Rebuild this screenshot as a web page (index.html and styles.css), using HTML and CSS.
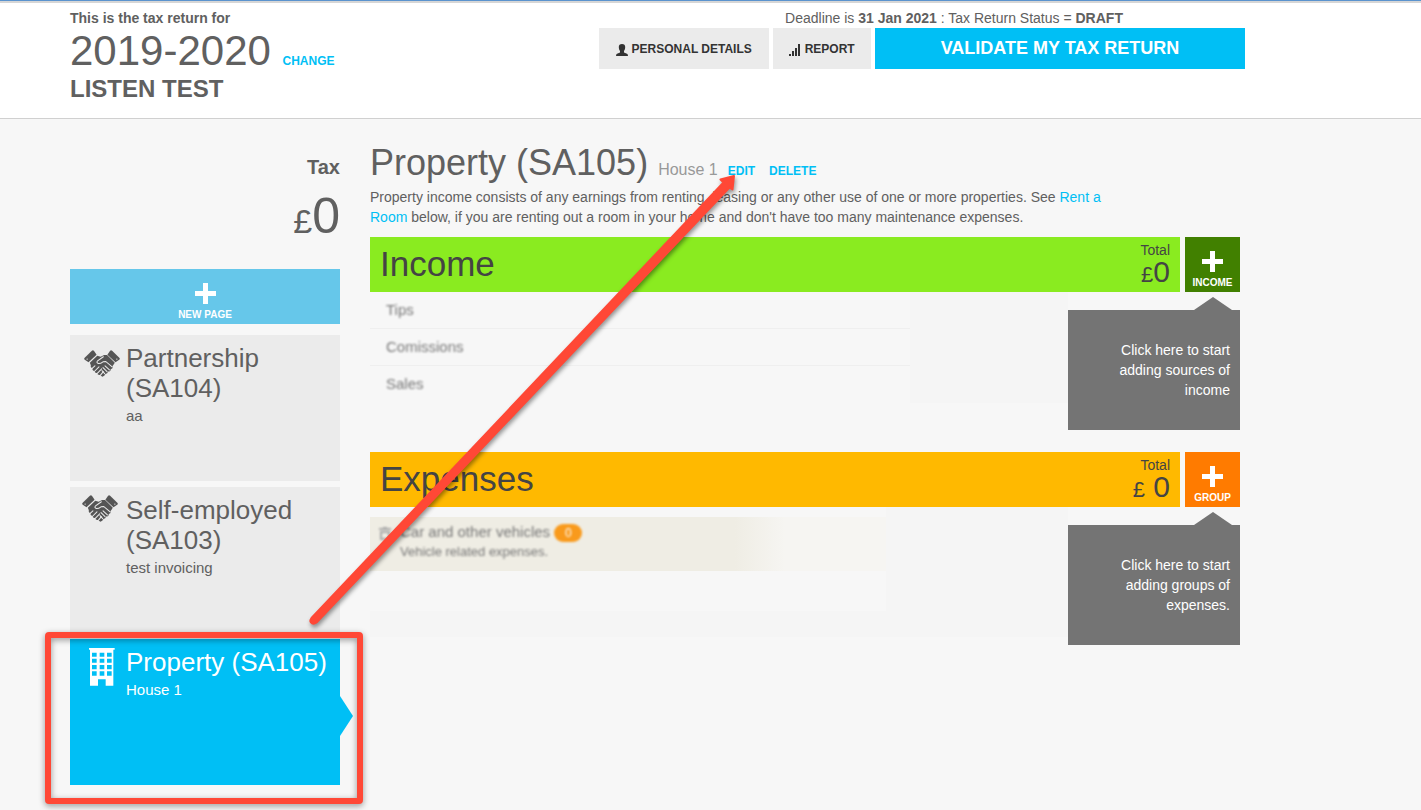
FILE: index.html
```
<!DOCTYPE html>
<html lang="en">
<head>
    <meta charset="UTF-8">
    <title>Tax return 2019-2020</title>
    <link rel="stylesheet" href="styles.css">
</head>
<body>
    <svg width="0" height="0" class="defs" aria-hidden="true">
        <symbol id="handshake" viewBox="0 0 106 80">
            <path fill="#555" d="M1 24L23 2q3-3 6 0l8 12-24 22L2 29q-3-2-1-5z"/>
            <path fill="#555" d="M105 24L83 2q-3-3-6 0l-8 12 24 22 11-7q3-2 1-5z"/>
            <path fill="#555" d="M17 38L39 17l10 3 10-5h9l23 23-7 10q3 7-5 8 0 8-8 8-1 7-8 7-2 7-9 8l-7-5q-8 1-8-6-8 1-8-6-8-1-6-8-7-2-5-9z"/>
            <g fill="none" stroke="#ebebeb" stroke-width="3" stroke-linecap="round">
                <path d="M57 20L40 32q-5 6 2 8 6 1 14-5l8-1 19 16"/>
                <path d="M23 55l9-8M31 63l13-13M39 69l13-13M48 75l9-11"/>
                <path d="M62 47l13 12M56 52l12 12M53 61l8 9"/>
            </g>
            <circle cx="9" cy="27" r="2" fill="#ebebeb"/>
            <circle cx="97" cy="27" r="2" fill="#ebebeb"/>
        </symbol>
        <symbol id="plus" viewBox="0 0 21 21">
            <path fill="#fff" d="M8 0h5v8h8v5h-8v8H8v-8H0V8h8z"/>
        </symbol>
    </svg>

    <header>
        <div class="wrap top">
            <div>
                <p class="label">This is the tax return for</p>
                <p class="year">2019-2020 <a class="action" href="#">CHANGE</a></p>
                <p class="client">LISTEN TEST</p>
            </div>
            <div class="tools">
                <p class="deadline">Deadline is <b>31 Jan 2021</b> : Tax Return Status = <b>DRAFT</b></p>
                <div class="buttons">
                    <button class="grey details">
                        <svg width="12" height="12" viewBox="0 0 12 12"><path fill="#333" d="M6 0c2.200 0 3.200 1 3.200 3 0 2-.6 3-1.200 4v1.500L11 9.700q1 .5 1 2.300H0q0-1.800 1-2.300l3-1.200V7C3.400 6 2.800 5 2.800 3c0-2 1-3 3.200-3z"/></svg>
                        PERSONAL DETAILS
                    </button>
                    <button class="grey report">
                        <svg width="12" height="12" viewBox="0 0 12 12"><path fill="#333" d="M0 10h2v2H0zM3 7h2v5H3zM6 4h2v8H6zM9 0h2v12H9z"/></svg>
                        REPORT
                    </button>
                    <button class="validate">VALIDATE MY TAX RETURN</button>
                </div>
            </div>
        </div>
    </header>

    <div class="wrap columns">
        <aside>
            <h2>Tax</h2>
            <p class="tax"><small>£</small>0</p>
            <button class="add newPage"><svg width="21" height="21"><use href="#plus"/></svg>NEW PAGE</button>
            <nav>
                <a class="card" href="#">
                    <span class="icon"><svg width="36" height="27"><use href="#handshake"/></svg></span>
                    <span><strong>Partnership (SA104)</strong><em>aa</em></span>
                </a>
                <a class="card" href="#">
                    <span class="icon upper"><svg width="36" height="27"><use href="#handshake"/></svg></span>
                    <span><strong>Self-employed (SA103)</strong><em>test invoicing</em></span>
                </a>
                <a class="card active" href="#">
                    <span class="icon building">
                        <svg width="26" height="38" viewBox="0 0 78 114">
                            <path fill="#fff" fill-rule="evenodd" d="M0 0h77v5h-4v108H50V94H27v19H3V5H0zM9 14v12h14V14zM32 14v12h14V14zM54 14v12h14V14zM9 32v12h14V32zM32 32v12h14V32zM54 32v12h14V32zM9 51v13h14V51zM32 51v13h14V51zM54 51v13h14V51zM9 70v13h14V70zM32 70v13h14V70zM54 70v13h14V70z"/>
                        </svg>
                    </span>
                    <span><strong>Property (SA105)</strong><em>House 1</em></span>
                </a>
            </nav>
        </aside>

        <main>
            <h1>Property (SA105) <small>House 1</small> <a class="action" href="#">EDIT</a> <a class="action" href="#">DELETE</a></h1>
            <p class="intro">Property income consists of any earnings from renting, leasing or any other use of one or more properties. See <a href="#">Rent a Room</a> below, if you are renting out a room in your home and don't have too many maintenance expenses.</p>

            <section>
                <div class="bar income">
                    <h3>Income</h3>
                    <p class="total">Total<span><small>£</small>0</span></p>
                </div>
                <button class="add addIncome"><svg width="21" height="21"><use href="#plus"/></svg>INCOME</button>
                <div class="list sources">
                    <ul>
                        <li><span>Tips</span></li>
                        <li><span>Comissions</span></li>
                        <li><span>Sales</span></li>
                    </ul>
                </div>
                <p class="hint">Click here to start adding sources of income</p>
            </section>

            <section>
                <div class="bar expenses">
                    <h3>Expenses</h3>
                    <p class="total">Total<span><small>£</small> 0</span></p>
                </div>
                <button class="add addGroup"><svg width="21" height="21"><use href="#plus"/></svg>GROUP</button>
                <div class="list groups">
                    <div class="inner">
                        <div class="group">
                            <svg width="12" height="13" viewBox="0 0 12 13"><path fill="none" stroke="#aaa" stroke-width="2" d="M0 2h12M2 5h8v7H2zM4 1h4"/></svg>
                            <div>
                                <p>Car and other vehicles <span class="count">0</span></p>
                                <p class="note">Vehicle related expenses.</p>
                            </div>
                        </div>
                    </div>
                </div>
                <p class="hint">Click here to start adding groups of expenses.</p>
            </section>
        </main>
    </div>

    <!-- annotations drawn over the page -->
    <div class="highlight"></div>
    <svg class="arrow" width="450" height="470" viewBox="300 165 450 470" aria-hidden="true">
        <path fill="#ff4836" stroke="#ff4836" stroke-width="2" stroke-linejoin="round" d="M311.500 618L723.500 182.500 720.500 179.500 734 176 732.500 189.500 729.500 187.500 316.500 622.500Q313 625 311 622.500 309.500 620.500 311.500 618z"/>
    </svg>
</body>
</html>
```
FILE: styles.css
```
*{
    box-sizing: border-box;
}
body{
    margin: 0;
    background: #f7f7f7;
    color: #606060;
    font-family: "Liberation Sans", Arial, sans-serif;
    font-size: 14px;
    line-height: 20px;
}
h1,h2,h3,p,ul{
    margin: 0;
    padding: 0;
    font-weight: normal;
}
a{
    color: #00bff5;
    text-decoration: none;
}
small{
    line-height: 1;
}
button{
    border: none;
    padding: 0;
    font-family: inherit;
    font-weight: bold;
    cursor: pointer;
}
.defs{
    position: absolute;
}
.wrap{
    max-width: 1175px;
    margin: 0 70px;
}
.action{
    font-size: 12px;
    line-height: 1;
    font-weight: bold;
}

/* header */
header{
    background: #fff;
    border-top: 1px solid #5a93ce;
    border-bottom: 1px solid #d0d0d0;
    box-shadow: inset 0 2px #d6d6d6;
    padding: 7px 0 14px;
}
.top{
    display: flex;
    justify-content: space-between;
}
.label{
    font-weight: bold;
}
.year{
    font-size: 42px;
    line-height: 46px;
}
.client{
    font-size: 24px;
    line-height: 30px;
    font-weight: bold;
}
.deadline{
    padding-left: 64px;
    text-align: center;
}
.buttons{
    display: flex;
    gap: 4px;
}
.buttons button{
    height: 41px;
}
.grey{
    background: #ebebeb;
    color: #333;
    font-size: 12px;
}
.grey svg{
    vertical-align: -3px;
}
.details{
    width: 170px;
}
.report{
    width: 98px;
}
.validate{
    width: 370px;
    background: #00bff5;
    color: #fff;
    font-size: 18px;
}

/* sidebar */
.columns{
    display: flex;
    gap: 30px;
    padding: 24px 5px 24px 0;
}
aside{
    flex: 0 0 270px;
    padding-top: 12px;
}
aside h2{
    font-size: 20px;
    line-height: 24px;
    font-weight: bold;
    text-align: right;
}
.tax{
    margin: 7px 0 23px;
    font-size: 50px;
    line-height: 60px;
    text-align: right;
}
.tax small{
    font-size: 34px;
}
.add{
    display: flex;
    flex-direction: column;
    align-items: center;
    gap: 4px;
    height: 55px;
    padding-top: 14px;
    color: #fff;
    font-size: 10px;
    line-height: 14px;
}
.newPage{
    width: 100%;
    background: #66c7ea;
}
nav{
    display: flex;
    flex-direction: column;
    gap: 6px;
    margin-top: 11px;
}
.card{
    display: flex;
    position: relative;
    min-height: 146px;
    padding-top: 8px;
    background: #ebebeb;
    color: #606060;
}
.icon{
    flex: 0 0 56px;
    padding: 7px 0 0 14px;
}
.icon.upper{
    padding: 0 0 0 12px;
}
.icon.building{
    padding: 1px 0 0 19px;
}
.icon svg{
    display: block;
}
.card strong,.card em{
    display: block;
    font-weight: normal;
    font-style: normal;
}
.card strong{
    font-size: 26px;
    line-height: 30px;
    margin-bottom: 3px;
}
.card em{
    font-size: 15px;
}
.active{
    background: #00bff5;
    color: #fff;
}
.active:after{
    content: "";
    position: absolute;
    left: 100%;
    top: 57px;
    border: solid transparent;
    border-width: 20px 0 20px 13px;
    border-left-color: #00bff5;
}

/* content */
main{
    flex: 1;
}
h1{
    font-size: 36px;
    line-height: 40px;
    margin-bottom: 4px;
}
h1 small{
    color: #999;
    font-size: 16px;
}
h1 .action + .action{
    margin-left: 4px;
}
.intro{
    max-width: 750px;
    margin-bottom: 10px;
}
section{
    display: grid;
    grid-template-columns: 1fr 112px 55px;
    column-gap: 5px;
    align-items: start;
    margin-bottom: 22px;
}
.bar{
    grid-column: span 2;
    display: flex;
    justify-content: space-between;
    height: 55px;
    padding: 4px 10px;
    color: #444;
}
.bar h3{
    font-size: 35px;
    line-height: 46px;
}
.income{
    background: #8aeb20;
}
.expenses{
    background: #ffb900;
}
.addIncome{
    background: #418000;
}
.addGroup{
    background: #ff7b00;
}
.total{
    line-height: 18px;
    text-align: right;
}
.total span{
    display: block;
    font-size: 30px;
    line-height: 26px;
}
.total small{
    font-size: 22px;
}
.list{
    margin-right: -5px;
    background: #f5f5f5;
    color: #777;
    font-size: 15px;
    font-weight: bold;
}
.sources ul{
    max-width: 540px;
    background: #f7f7f7;
    list-style: none;
}
.sources li{
    height: 37px;
    padding: 8px 16px;
    border-bottom: 1px solid #efefef;
}
.sources li:last-child{
    border: none;
}
.sources span,.group p,.group svg{
    filter: blur(1px);
}
.groups{
    padding-bottom: 26px;
}
.inner{
    max-width: 516px;
    padding: 10px 0 40px;
    background: #f7f7f7;
}
.group{
    display: flex;
    gap: 9px;
    height: 54px;
    padding: 5px 9px;
    background: linear-gradient(90deg, #efede4 365px, #f6f5f2 415px);
}
.group svg{
    margin-top: 5px;
}
.note{
    font-size: 13px;
}
.count{
    display: inline-block;
    width: 28px;
    border-radius: 9px;
    background: #f99a1c;
    color: #fff;
    font-size: 12px;
    line-height: 18px;
    text-align: center;
}
.hint{
    grid-column: span 2;
    position: relative;
    margin-top: 18px;
    min-height: 120px;
    padding: 30px 10px;
    background: #747474;
    color: #fff;
    text-align: right;
}
.hint:before{
    content: "";
    position: absolute;
    right: 8px;
    bottom: 100%;
    border: solid transparent;
    border-width: 0 19px 13px;
    border-bottom-color: #747474;
}

/* annotations */
.highlight{
    position: absolute;
    left: 45px;
    top: 632px;
    width: 318px;
    height: 172px;
    border: 6px solid #ff4836;
    border-radius: 4px;
    filter: drop-shadow(0 2px 3px rgba(0, 0, 0, 0.4));
    pointer-events: none;
}
.arrow{
    position: absolute;
    left: 300px;
    top: 165px;
    filter: drop-shadow(1px 3px 2px rgba(0, 0, 0, 0.4));
    pointer-events: none;
}
```
